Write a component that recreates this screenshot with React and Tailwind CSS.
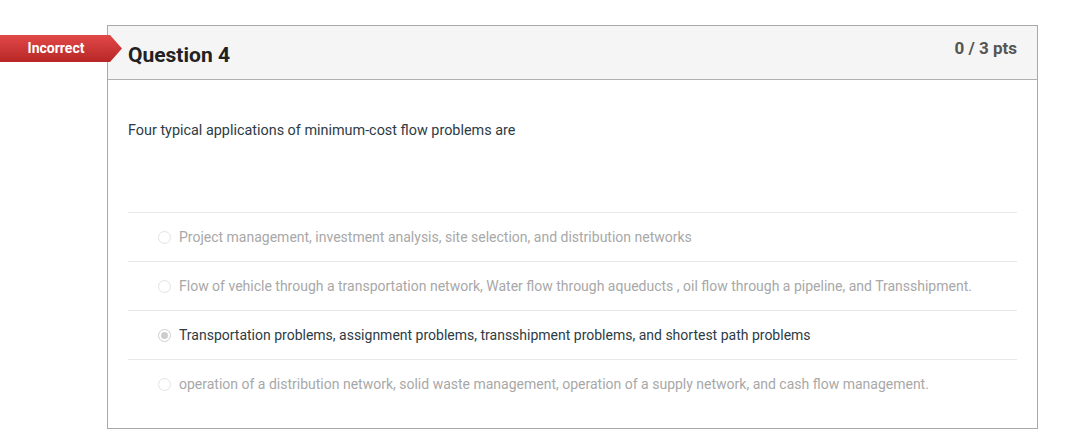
import React from "react";

const answers = [
  { text: "Project management, investment analysis, site selection, and distribution networks", selected: false },
  { text: "Flow of vehicle through a transportation network, Water flow through aqueducts , oil flow through a pipeline, and Transshipment.", selected: false },
  { text: "Transportation problems, assignment problems, transshipment problems, and shortest path problems", selected: true },
  { text: "operation of a distribution network, solid waste management, operation of a supply network, and cash flow management.", selected: false },
];

function Radio({ selected }) {
  return (
    <span
      className={`flex h-[13px] w-[13px] shrink-0 items-center justify-center rounded-full border bg-white ${
        selected ? "border-[#cfcfcf]" : "border-[#e3e3e3]"
      }`}
    >
      {selected && <span className="h-[7px] w-[7px] rounded-full bg-[#cdcdcd]" />}
    </span>
  );
}

export default function App() {
  return (
    <div className="relative min-h-[443px] bg-white pt-[25px] font-['Roboto',sans-serif]">
      <div className="absolute left-0 top-[35px] flex h-[27px] items-stretch">
        <div className="flex w-[110px] items-center justify-center bg-gradient-to-b from-[#e24848] to-[#b72626] pl-[2px] text-[14px] font-bold text-white">
          Incorrect
        </div>
        <svg width="12" height="27" viewBox="0 0 12 27" className="block">
          <defs>
            <linearGradient id="g" x1="0" y1="0" x2="0" y2="1">
              <stop offset="0" stopColor="#e24848" />
              <stop offset="1" stopColor="#b72626" />
            </linearGradient>
          </defs>
          <path d="M0 0 L12 13.5 L0 27 Z" fill="url(#g)" />
        </svg>
      </div>
      <div className="ml-[107px] w-[931px] border border-[#a9a9a9]">
        <div className="flex h-[54px] items-start justify-between border-b border-[#b0b0b0] bg-[#f5f5f5] px-[20px]">
          <div className="pt-[14px] text-[21px] font-bold leading-[30px] text-[#222]">Question 4</div>
          <div className="pt-[11px] text-[17px] font-bold leading-[22px] text-[#555]">0 / 3 pts</div>
        </div>
        <div className="px-[20px] pb-[20px]">
          <div className="mt-[41px] text-[14.4px] leading-[20px] text-[#2d3b45]">
            Four typical applications of minimum-cost flow problems are
          </div>
          <div className="mt-[71px]">
            {answers.map((a, i) => (
              <div key={i} className="flex h-[49px] items-center gap-[8px] border-t border-[#e8e8e8] pl-[30px]">
                <Radio selected={a.selected} />
                <span className={`text-[14px] leading-[20px] ${a.selected ? "text-[#2d3b45]" : "text-[#a8a8a8]"}`}>
                  {a.text}
                </span>
              </div>
            ))}
          </div>
        </div>
      </div>
    </div>
  );
}
